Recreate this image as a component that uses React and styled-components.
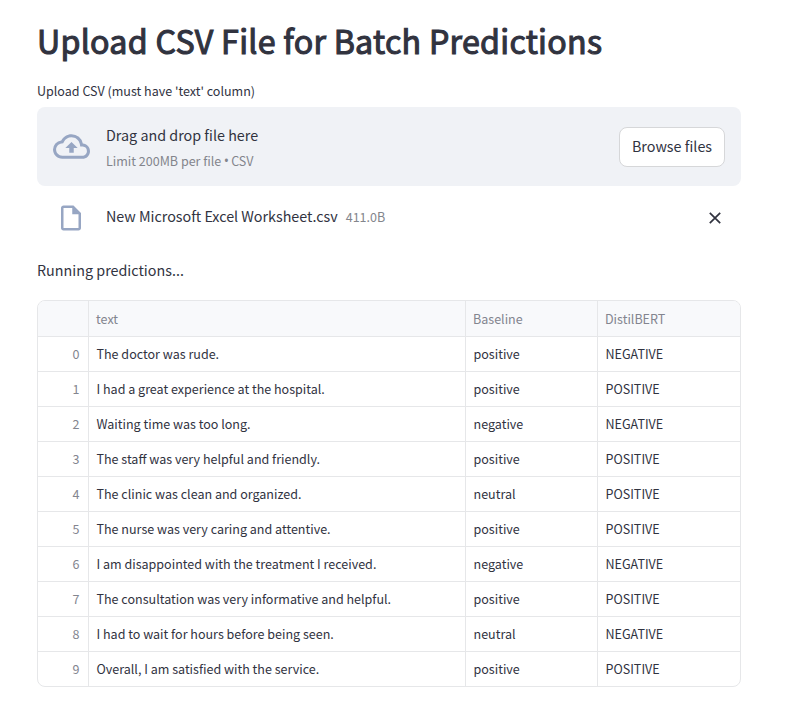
import React from "react";
import styled, { createGlobalStyle } from "styled-components";

const Global = createGlobalStyle`
  * { box-sizing: border-box; }
  body {
    margin: 0;
    background: #ffffff;
    color: #31333f;
    font-family: "Source Sans Pro", "Noto Sans CJK SC", sans-serif;
    font-size: 14.33px;
  }
`;

const Page = styled.main`
  width: 704px;
  margin-left: 37px;
  padding-top: 14px;
  display: flex;
  flex-direction: column;
`;

const Title = styled.h1`
  margin: 0;
  height: 53px;
  line-height: 53px;
  font-size: 32.2px;
  font-weight: 400;
  letter-spacing: 0.27px;
  -webkit-text-stroke: 1.1px currentColor;
  white-space: nowrap;
`;

const Label = styled.label`
  margin-top: 14px;
  height: 26px;
  line-height: 20px;
  font-size: 12.54px;
`;

const Dropzone = styled.section`
  height: 79px;
  padding: 0 16px;
  display: flex;
  align-items: center;
  background: #f0f2f6;
  border-radius: 8px;
`;

const IconSlot = styled.span`
  width: 37px;
  margin-right: 16px;
  display: flex;
  justify-content: center;
  color: #97a6c3;
  svg { display: block; }
`;

const Instructions = styled.div`
  flex: 1;
  padding-top: 2px;
  display: flex;
  flex-direction: column;
`;

const Prompt = styled.span`
  line-height: 26px;
`;

const Small = styled.span`
  line-height: 25px;
  font-size: 12.54px;
  color: #83858c;
`;

const Bullet = styled.span`
  font-family: "Open Sans", sans-serif;
  font-size: 14px;
  line-height: 1;
  margin: 0 -0.5px;
`;

const BrowseButton = styled.button`
  width: 106px;
  height: 40px;
  padding: 0 0 2px;
  border: 1px solid #d6d7d9;
  border-radius: 8px;
  background: #ffffff;
  color: inherit;
  font: inherit;
`;

const FileRow = styled.div`
  height: 64px;
  padding: 0 16px;
  display: flex;
  align-items: center;
`;

const FileIconSlot = styled(IconSlot)`
  padding-right: 1px;
`;

const FileName = styled.span`
  margin-right: 8px;
  padding-bottom: 5px;
  letter-spacing: -0.02px;
`;

const FileSize = styled(Small)`
  padding-bottom: 3px;
`;

const RemoveButton = styled.button`
  margin-left: auto;
  width: 20px;
  height: 20px;
  padding: 0;
  border: 0;
  background: none;
  color: #31333f;
  svg { display: block; }
`;

const Status = styled.p`
  margin: 7px 0 17px;
  height: 26px;
  line-height: 26px;
`;

const Table = styled.div`
  border: 1px solid #e6e7e9;
  border-radius: 8px;
  overflow: hidden;
  font-size: 12.54px;
`;

const Row = styled.div`
  display: grid;
  grid-template-columns: 51px 377px 132px 1fr;
  height: ${(p) => (p.$last ? 34 : 35)}px;
  border-bottom: ${(p) => (p.$last ? 0 : 1)}px solid #e6e7e9;
`;

const HeaderRow = styled(Row)`
  height: 36px;
  background: #f8f9fb;
  color: #83858f;
`;

const Cell = styled.div`
  padding: 0 8px 0 7.5px;
  line-height: 34px;
  white-space: nowrap;
  border-right: 1px solid #e6e7e9;
  &:last-child { border-right: 0; }
`;

const HeaderCell = styled(Cell)`
  padding: 0 7px;
  line-height: 35px;
`;

const IndexCell = styled(Cell)`
  text-align: right;
  padding-right: 8.5px;
  color: #83858f;
`;

const rows = [
  ["The doctor was rude.", "positive", "NEGATIVE"],
  ["I had a great experience at the hospital.", "positive", "POSITIVE"],
  ["Waiting time was too long.", "negative", "NEGATIVE"],
  ["The staff was very helpful and friendly.", "positive", "POSITIVE"],
  ["The clinic was clean and organized.", "neutral", "POSITIVE"],
  ["The nurse was very caring and attentive.", "positive", "POSITIVE"],
  ["I am disappointed with the treatment I received.", "negative", "NEGATIVE"],
  ["The consultation was very informative and helpful.", "positive", "POSITIVE"],
  ["I had to wait for hours before being seen.", "neutral", "NEGATIVE"],
  ["Overall, I am satisfied with the service.", "positive", "POSITIVE"],
];

const CloudIcon = () => (
  <svg width="37" height="37" viewBox="0 0 24 24" fill="currentColor">
    <path d="M19.35 10.04A7.49 7.49 0 0012 4C9.11 4 6.6 5.64 5.35 8.04A5.994 5.994 0 000 14c0 3.31 2.69 6 6 6h13c2.76 0 5-2.24 5-5 0-2.64-2.05-4.78-4.65-4.96zM19 18H6c-2.21 0-4-1.79-4-4 0-2.05 1.53-3.76 3.56-3.97l1.07-.11.5-.95A5.469 5.469 0 0112 6c2.62 0 4.88 1.86 5.39 4.43l.3 1.5 1.53.11A2.98 2.98 0 0122 15c0 1.65-1.35 3-3 3zM8 13h2.55v3h2.9v-3H16l-4-4z" />
  </svg>
);

const FileIcon = () => (
  <svg width="30" height="30" viewBox="0 0 24 24" fill="currentColor">
    <path d="M14 2H6c-1.1 0-1.99.9-1.99 2L4 20c0 1.1.89 2 1.99 2H18c1.1 0 2-.9 2-2V8l-6-6zM6 20V4h7v5h5v11H6z" />
  </svg>
);

const CloseIcon = () => (
  <svg width="20" height="20" viewBox="0 0 20 20" fill="none" stroke="currentColor" strokeWidth="1.7">
    <path d="M4.8 4.8l10.4 10.4M15.2 4.8L4.8 15.2" />
  </svg>
);

export default function App() {
  return (
    <>
      <Global />
      <Page>
        <Title>Upload CSV File for Batch Predictions</Title>
        <Label>Upload CSV (must have 'text' column)</Label>
        <Dropzone>
          <IconSlot><CloudIcon /></IconSlot>
          <Instructions>
            <Prompt>Drag and drop file here</Prompt>
            <Small>Limit 200MB per file <Bullet>•</Bullet> CSV</Small>
          </Instructions>
          <BrowseButton>Browse files</BrowseButton>
        </Dropzone>
        <FileRow>
          <FileIconSlot><FileIcon /></FileIconSlot>
          <FileName>New Microsoft Excel Worksheet.csv</FileName>
          <FileSize>411.0B</FileSize>
          <RemoveButton aria-label="Remove file"><CloseIcon /></RemoveButton>
        </FileRow>
        <Status>Running predictions...</Status>
        <Table>
          <HeaderRow>
            <HeaderCell />
            <HeaderCell>text</HeaderCell>
            <HeaderCell>Baseline</HeaderCell>
            <HeaderCell>DistilBERT</HeaderCell>
          </HeaderRow>
          {rows.map(([text, baseline, bert], i) => (
            <Row key={text} $last={i === rows.length - 1}>
              <IndexCell>{i}</IndexCell>
              <Cell>{text}</Cell>
              <Cell>{baseline}</Cell>
              <Cell>{bert}</Cell>
            </Row>
          ))}
        </Table>
      </Page>
    </>
  );
}
